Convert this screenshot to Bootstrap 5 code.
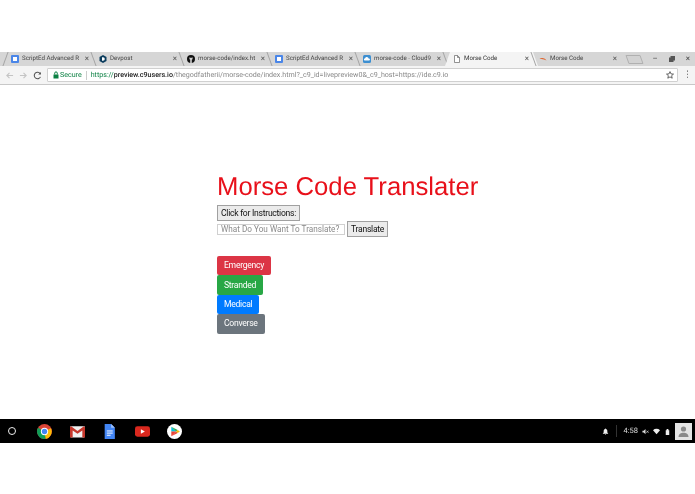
<!DOCTYPE html>
<html lang="en">
<head>
  <meta charset="UTF-8" />
  <title>Morse Code</title>
  <meta name="viewport" content="width=device-width, initial-scale=1" />
  <link href="https://cdn.jsdelivr.net/npm/bootstrap@5.3.0/dist/css/bootstrap.min.css" rel="stylesheet" />
  <style>
    html, body { background: #fff; overflow: hidden; }
    body { font-family: Roboto, "Liberation Sans", sans-serif; height: 494px; text-rendering: geometricPrecision; }

    .top-gap { height: 52px; }
    .bottom-gap { height: 51px; }
    /* own layer: greyscale text like the downscaled screenshot */
    .tab-strip, .tool-bar, .page-body, .shelf { will-change: transform; }

    .tab-strip { height: 14px; background: #d6d6d6; padding-left: 7px; overflow: hidden; }
    .chrome-tab {
      width: 88px; height: 14px; padding: 0 6px 0 4px; font-size: 6.2px; color: #444;
      white-space: nowrap; position: relative; flex: none;
    }
    .chrome-tab::before {
      content: ""; position: absolute; left: -2px; top: 0; width: 1px; height: 14px;
      background: #a4a4a4; transform: skewX(20deg);
    }
    .chrome-tab.lean-right::before { transform: skewX(-20deg); }
    .chrome-tab.is-active { color: #333; }
    .chrome-tab.is-active::after {
      content: ""; position: absolute; left: -2px; right: -3px; top: 0; height: 14px; background: #f4f4f4;
      clip-path: polygon(5px 0, calc(100% - 5px) 0, 100% 100%, 0 100%); z-index: 0;
    }
    .chrome-tab > * { position: relative; z-index: 1; }
    .is-active .tab-ico { margin-left: 2px; }
    .tab-name { flex: 1; overflow: hidden; margin-left: 3px; }
    .tab-x { font-size: 8px; color: #555; margin-left: 2px; }
    .tab-ico { width: 8px; height: 8px; flex: none; display: block; }
    .new-tab { width: 15px; height: 9px; margin-left: 4px; border: 1px solid #b0b0b0; background: #d2d2d2; border-radius: 1px; transform: skewX(20deg); }
    .win-btns { gap: 10px; font-size: 8px; color: #444; padding-right: 5px; margin-left: auto; }

    .tool-bar { height: 19px; background: #f4f4f4; border-bottom: 1px solid #c8c8c8; padding: 0 7px 0 5px; gap: 5px; }
    .nav-ico { width: 9px; height: 9px; flex: none; display: block; }
    .url-box {
      flex: 1; height: 14px; background: #fff; border: 1px solid #d0d0d0; border-radius: 1px;
      font-size: 7.1px; padding: 0 3px 0 4px; white-space: nowrap; color: #888;
    }
    .url-secure { color: #0b8043; }
    .url-sep { width: 1px; height: 9px; background: #ccc; margin: 0 4px; }
    .url-host { color: #222; font-weight: 500; }
    .menu-dots { color: #555; font-size: 9px; line-height: 1; width: 5px; }

    .page-body { height: 334px; padding: 87px 0 0 217px; }
    .page-title { font-family: "Liberation Sans", sans-serif; font-size: 25.7px; line-height: 30px; color: #e8101a; font-weight: 400; margin: 0 0 3px; }
    .plain-btn {
      font-family: Roboto, sans-serif; font-size: 8.6px; letter-spacing: -.27px; line-height: 10px; color: #111; background: #ebebeb;
      border: 1px solid #a0a0a0; border-radius: 0; padding: 2px 3px; height: 16px; display: block;
    }
    .ask-row { gap: 2px; }
    .ask-input {
      width: 128px; height: 11px; border: 1px solid #d0d0d0; padding: 0 3px; font-size: 8.2px;
      font-family: Roboto, sans-serif; border-radius: 0; outline: 0;
    }
    .ask-input::placeholder { color: #8a8a8a; opacity: 1; }
    .quick-btns { margin-top: 19px; }
    .quick-btn {
      display: block; font-size: 8.6px; letter-spacing: -.27px; line-height: 13px; padding: 3px 7px; height: 19.4px;
      border-radius: 2px; border: 0; width: max-content;
    }
    .quick-btn.btn-success { background: #28a745; }
    .quick-btn.btn-primary { background: #007bff; }

    .shelf { height: 24px; background: #000; padding: 0 3px 0 8px; }
    .shelf-ring { width: 8px; height: 8px; border: 1.2px solid #eee; border-radius: 50%; flex: none; }
    .shelf-app { width: 15px; height: 15px; display: block; flex: none; }
    .shelf-apps { gap: 17.5px; margin-left: 21px; }
    .shelf-tray { margin-left: auto; color: #ddd; font-size: 7.5px; gap: 4px; }
    .tray-sep { width: 1px; height: 12px; background: #333; margin: 0 3px; }
    .tray-ico { width: 7px; height: 7px; display: block; flex: none; }
    .avatar { width: 17px; height: 17px; display: block; flex: none; }
  </style>
</head>
<body>
  <div class="top-gap"></div>

  <div class="tab-strip d-flex align-items-center">
    <div class="chrome-tab lean-right d-flex align-items-center">
      <svg class="tab-ico" viewBox="0 0 8 8"><rect width="8" height="8" rx="1" fill="#4a86e8"/><rect x="2" y="2" width="4" height="4" fill="#fff"/></svg>
      <span class="tab-name">ScriptEd Advanced R</span><span class="tab-x">×</span>
    </div>
    <div class="chrome-tab d-flex align-items-center">
      <svg class="tab-ico" viewBox="0 0 8 8"><path d="M4 0 7.500 2v4L4 8 .5 6V2z" fill="#0b3c5d"/><path d="M3 2.200v3.600h1a1.800 1.800 0 0 0 0-3.600z" fill="#fff"/></svg>
      <span class="tab-name">Devpost</span><span class="tab-x">×</span>
    </div>
    <div class="chrome-tab d-flex align-items-center">
      <svg class="tab-ico" viewBox="0 0 8 8"><circle cx="4" cy="4" r="4" fill="#111"/><path d="M2.400 2.200 3.200 2.700h1.600l.8-.5v1.600l-.5.9H2.900l-.5-.9zM3.200 4.600h1.600V8H3.200z" fill="#d0d0d0"/></svg>
      <span class="tab-name">morse-code/index.ht</span><span class="tab-x">×</span>
    </div>
    <div class="chrome-tab d-flex align-items-center">
      <svg class="tab-ico" viewBox="0 0 8 8"><rect width="8" height="8" rx="1" fill="#4a86e8"/><rect x="2" y="2" width="4" height="4" fill="#fff"/></svg>
      <span class="tab-name">ScriptEd Advanced R</span><span class="tab-x">×</span>
    </div>
    <div class="chrome-tab d-flex align-items-center">
      <svg class="tab-ico" viewBox="0 0 8 8"><rect width="8" height="8" rx="1.500" fill="#3d8fd1"/><path d="M1.500 5.500a1.200 1.200 0 0 1 .6-2.200 1.800 1.800 0 0 1 3.500.2 1 1 0 0 1 .6 2z" fill="#fff"/></svg>
      <span class="tab-name">morse-code - Cloud9</span><span class="tab-x">×</span>
    </div>
    <div class="chrome-tab is-active d-flex align-items-center">
      <svg class="tab-ico" viewBox="0 0 8 8"><path d="M1.500.5h3l2 2v5h-5zM4.500.5v2h2" fill="#fff" stroke="#666" stroke-width=".7"/></svg>
      <span class="tab-name">Morse Code</span><span class="tab-x">×</span>
    </div>
    <div class="chrome-tab d-flex align-items-center">
      <svg class="tab-ico" viewBox="0 0 8 8"><path d="M.5 4C2.500 2.500 5 2.500 7.500 5.500 5 4.200 3 4 .5 4z" fill="#e0622a"/></svg>
      <span class="tab-name">Morse Code</span><span class="tab-x">×</span>
    </div>
    <div class="new-tab"></div>
    <div class="win-btns d-flex align-items-center">
      <span>–</span>
      <svg class="tab-ico" viewBox="0 0 8 8"><path d="M2.500 1h4.500v4.500H5.500V7H1V2.500h1.500z" fill="#555"/></svg>
      <span>×</span>
    </div>
  </div>

  <div class="tool-bar d-flex align-items-center">
    <svg class="nav-ico" viewBox="0 0 10 10"><path d="M9 5H2M5 2 2 5l3 3" fill="none" stroke="#c4c4c4" stroke-width="1.200"/></svg>
    <svg class="nav-ico" viewBox="0 0 10 10"><path d="M1 5h7M5 2l3 3-3 3" fill="none" stroke="#c4c4c4" stroke-width="1.200"/></svg>
    <svg class="nav-ico" viewBox="0 0 10 10"><path d="M8.300 6.500A3.600 3.600 0 1 1 8 3" fill="none" stroke="#555" stroke-width="1.200"/><path d="M8.800 1v3h-3z" fill="#555"/></svg>
    <div class="url-box d-flex align-items-center">
      <svg class="tab-ico" viewBox="0 0 8 8"><rect x="1.500" y="3.500" width="5" height="4" fill="#0b8043"/><path d="M2.700 3.500V2.200a1.300 1.300 0 0 1 2.600 0v1.300" fill="none" stroke="#0b8043"/></svg>
      <span class="url-secure">Secure</span>
      <span class="url-sep"></span>
      <span><span class="url-secure">https://</span><span class="url-host">preview.c9users.io</span>/thegodfatherii/morse-code/index.html?_c9_id=livepreview0&amp;_c9_host=https://ide.c9.io</span>
      <svg class="tab-ico ms-auto" viewBox="0 0 8 8"><path d="m4 .6 1 2.300 2.500.2-1.900 1.600.6 2.500L4 5.900 1.800 7.200l.6-2.500L.5 3.100 3 2.900z" fill="none" stroke="#444" stroke-width=".8"/></svg>
    </div>
    <span class="menu-dots text-center">⋮</span>
  </div>

  <div class="page-body">
    <h1 class="page-title">Morse Code Translater</h1>
    <button class="plain-btn" type="button">Click for Instructions:</button>
    <div class="ask-row d-flex align-items-center">
      <input class="ask-input" type="text" placeholder="What Do You Want To Translate?" />
      <button class="plain-btn" type="button">Translate</button>
    </div>
    <div class="quick-btns">
      <button class="btn btn-danger quick-btn" type="button">Emergency</button>
      <button class="btn btn-success quick-btn" type="button">Stranded</button>
      <button class="btn btn-primary quick-btn" type="button">Medical</button>
      <button class="btn btn-secondary quick-btn" type="button">Converse</button>
    </div>
  </div>

  <div class="shelf d-flex align-items-center">
    <div class="shelf-ring"></div>
    <div class="shelf-apps d-flex align-items-center">
      <svg class="shelf-app" viewBox="0 0 14 14"><circle cx="7" cy="7" r="7" fill="#db4437"/><path d="M7 7 13 4a7 7 0 0 1-5 9.900z" fill="#fbbc05"/><path d="M7 7 8 13.900A7 7 0 0 1 1 3.500z" fill="#0f9d58"/><circle cx="7" cy="7" r="3.400" fill="#fff"/><circle cx="7" cy="7" r="2.500" fill="#4285f4"/></svg>
      <svg class="shelf-app" viewBox="0 0 14 14"><rect y="2" width="14" height="10.500" rx="1" fill="#f1f1f1"/><path d="M0 3v9.500h2.500V6L7 9l4.500-3v6.500H14V3l-1-1-6 4.500L1 2z" fill="#c5372c"/></svg>
      <svg class="shelf-app" viewBox="0 0 14 14"><path d="M2.500 0h6L12 3.500V14H2.500z" fill="#4285f4"/><path d="M8.500 0 12 3.500H8.500z" fill="#a1c2fa"/><path d="M4.500 6.500h5.500M4.500 8.500h5.500M4.500 10.500h3.500" stroke="#fff" stroke-width=".9"/></svg>
      <svg class="shelf-app" viewBox="0 0 14 14"><rect y="2.200" width="14" height="9.600" rx="2.200" fill="#d9281e"/><path d="M5.500 4.800 9.200 7 5.500 9.200z" fill="#fff"/></svg>
      <svg class="shelf-app" viewBox="0 0 14 14"><circle cx="7" cy="7" r="7" fill="#fff"/><path d="M4 2.500V7h4.500z" fill="#00c3e3"/><path d="M4 11.500V7h4.500z" fill="#ea4335"/><path d="M4 2.500 8.500 7 10 5.500z" fill="#34a853"/><path d="M4 11.500 8.500 7 10 8.500z" fill="#ea4335"/><path d="M8.500 7 10 5.500 12 7l-2 1.500z" fill="#fbbc05"/></svg>
    </div>
    <div class="shelf-tray d-flex align-items-center">
      <svg class="tray-ico" viewBox="0 0 8 8"><path d="M4 .5a.6.6 0 0 1 .6.6 2.200 2.200 0 0 1 1.500 2.100V5L7 6v.5H1V6l.9-1V3.200A2.200 2.200 0 0 1 3.400 1.100.6.6 0 0 1 4 .5zM3.300 7h1.400a.7.7 0 0 1-1.400 0z" fill="#eee"/></svg>
      <span class="tray-sep"></span>
      <span>4:58</span>
      <svg class="tray-ico" viewBox="0 0 8 8"><path d="M.5 3v2h1.500L4 7V1L2 3z" fill="#ddd"/><path d="m5 3 2.500 2.500M7.500 3 5 5.500" stroke="#ddd" stroke-width=".8"/></svg>
      <svg class="tray-ico" viewBox="0 0 8 8"><path d="M0 2.500a5.600 5.600 0 0 1 8 0L4 7z" fill="#eee"/></svg>
      <svg class="tray-ico" viewBox="0 0 8 8"><path d="M2 2.500h4V8H2zM3 1h2v1.500H3z" fill="#eee"/></svg>
      <svg class="avatar" viewBox="0 0 17 17"><rect width="17" height="17" fill="#e4e4e4"/><circle cx="8.500" cy="6" r="2.600" fill="#8a8a8a"/><path d="M3.500 14c0-3 2.500-4.200 5-4.200s5 1.200 5 4.200z" fill="#8a8a8a"/></svg>
    </div>
  </div>
  <div class="bottom-gap"></div>

  <script src="https://cdn.jsdelivr.net/npm/bootstrap@5.3.0/dist/js/bootstrap.bundle.min.js"></script>
</body>
</html>
